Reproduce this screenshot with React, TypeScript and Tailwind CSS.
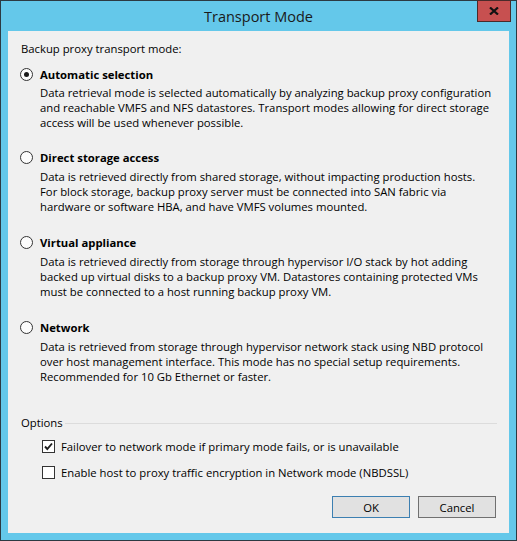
import React, { useState } from "react";

interface Mode {
  id: string;
  title: string;
  lines: string[];
}

const modes: Mode[] = [
  {
    id: "auto",
    title: "Automatic selection",
    lines: [
      "Data retrieval mode is selected automatically by analyzing backup proxy configuration",
      "and reachable VMFS and NFS datastores. Transport modes allowing for direct storage",
      "access will be used whenever possible.",
    ],
  },
  {
    id: "direct",
    title: "Direct storage access",
    lines: [
      "Data is retrieved directly from shared storage, without impacting production hosts.",
      "For block storage, backup proxy server must be connected into SAN fabric via",
      "hardware or software HBA, and have VMFS volumes mounted.",
    ],
  },
  {
    id: "virtual",
    title: "Virtual appliance",
    lines: [
      "Data is retrieved directly from storage through hypervisor I/O stack by hot adding",
      "backed up virtual disks to a backup proxy VM. Datastores containing protected VMs",
      "must be connected to a host running backup proxy VM.",
    ],
  },
  {
    id: "network",
    title: "Network",
    lines: [
      "Data is retrieved from storage through hypervisor network stack using NBD protocol",
      "over host management interface. This mode has no special setup requirements.",
      "Recommended for 10 Gb Ethernet or faster.",
    ],
  },
];

function Radio({ checked }: { checked: boolean }) {
  return (
    <div className="w-[13px] h-[13px] rounded-full border border-[#333333] bg-[#fcfcfc] flex items-center justify-center shrink-0">
      {checked && <div className="w-[5px] h-[5px] rounded-full bg-[#1a1a1a]" />}
    </div>
  );
}

function Checkbox({ checked }: { checked: boolean }) {
  return (
    <div className="w-[13px] h-[13px] border border-[#333333] bg-white shrink-0 flex items-center justify-center">
      {checked && (
        <svg width="11" height="11" viewBox="0 0 11 11">
          <path d="M2 5.5 L4.3 8 L9 2.5" fill="none" stroke="#1e1e1e" strokeWidth="1.9" />
        </svg>
      )}
    </div>
  );
}

export default function App() {
  const [mode, setMode] = useState("auto");
  const [failover, setFailover] = useState(true);
  const [ssl, setSsl] = useState(false);

  return (
    <div className="w-[517px] h-[541px] bg-[#64c8ea] border border-[#2c3a42] flex flex-col relative font-['Open_Sans',sans-serif] text-black">
      {/* title bar */}
      <div className="h-[30px] flex items-center justify-center text-[14.5px] text-[#1a1a1a] pt-[1px]">
        Transport Mode
      </div>
      <div className="absolute top-[-1px] right-[5px] w-[34px] h-[22px] bg-[#c75050] border border-[#4a2a2a] flex items-center justify-center">
        <svg width="10" height="8" viewBox="0 0 10 8">
          <path d="M1 0.5 L9 7.5 M9 0.5 L1 7.5" stroke="#111" strokeWidth="2.2" />
        </svg>
      </div>

      {/* client area */}
      <div className="mx-[7px] h-[502px] bg-[#f0f0f0] flex flex-col text-[11.3px] leading-[15px]">
        <div className="pl-[13px] pt-[10px] h-[25px]">Backup proxy transport mode:</div>

        {modes.map((m, i) => (
          <div
            key={m.id}
            className={i === 0 ? "mt-[11px] flex flex-col" : i === 1 ? "mt-[20px] flex flex-col" : "mt-[21px] flex flex-col"}
            onClick={() => setMode(m.id)}
          >
            <div className="flex items-center pl-[12px] h-[15px] gap-[7px]">
              <Radio checked={mode === m.id} />
              <span className="font-bold">{m.title}</span>
            </div>
            <div className={i === 0 ? "pl-[32px] mt-[3px]" : "pl-[32px] mt-[4px]"}>
              {m.lines.map((l) => (
                <div key={l} className="whitespace-nowrap h-[15px]">
                  {l}
                </div>
              ))}
            </div>
          </div>
        ))}

        <div className="mt-[31px] pl-[13px] pr-[12px] flex items-center h-[15px]">
          <span>Options</span>
          <div className="flex-1 h-px bg-[#dcdcdc] ml-[2px] mt-[1px]" />
        </div>

        <div className="mt-[9px] pl-[34px] flex flex-col gap-[11px]">
          <div className="flex items-center gap-[6px] h-[15px]" onClick={() => setFailover((p) => !p)}>
            <Checkbox checked={failover} />
            <span>Failover to network mode if primary mode fails, or is unavailable</span>
          </div>
          <div className="flex items-center gap-[6px] h-[15px]" onClick={() => setSsl((p) => !p)}>
            <Checkbox checked={ssl} />
            <span>Enable host to proxy traffic encryption in Network mode (NBDSSL)</span>
          </div>
        </div>

        <div className="mt-[16px] pr-[13px] flex justify-end gap-[8px]">
          <button className="w-[78px] h-[22px] bg-[#e1e1e1] border border-[#3c7fb1] text-[11.3px]">OK</button>
          <button className="w-[78px] h-[22px] bg-[#e1e1e1] border border-[#707070] text-[11.3px]">Cancel</button>
        </div>
      </div>
    </div>
  );
}
